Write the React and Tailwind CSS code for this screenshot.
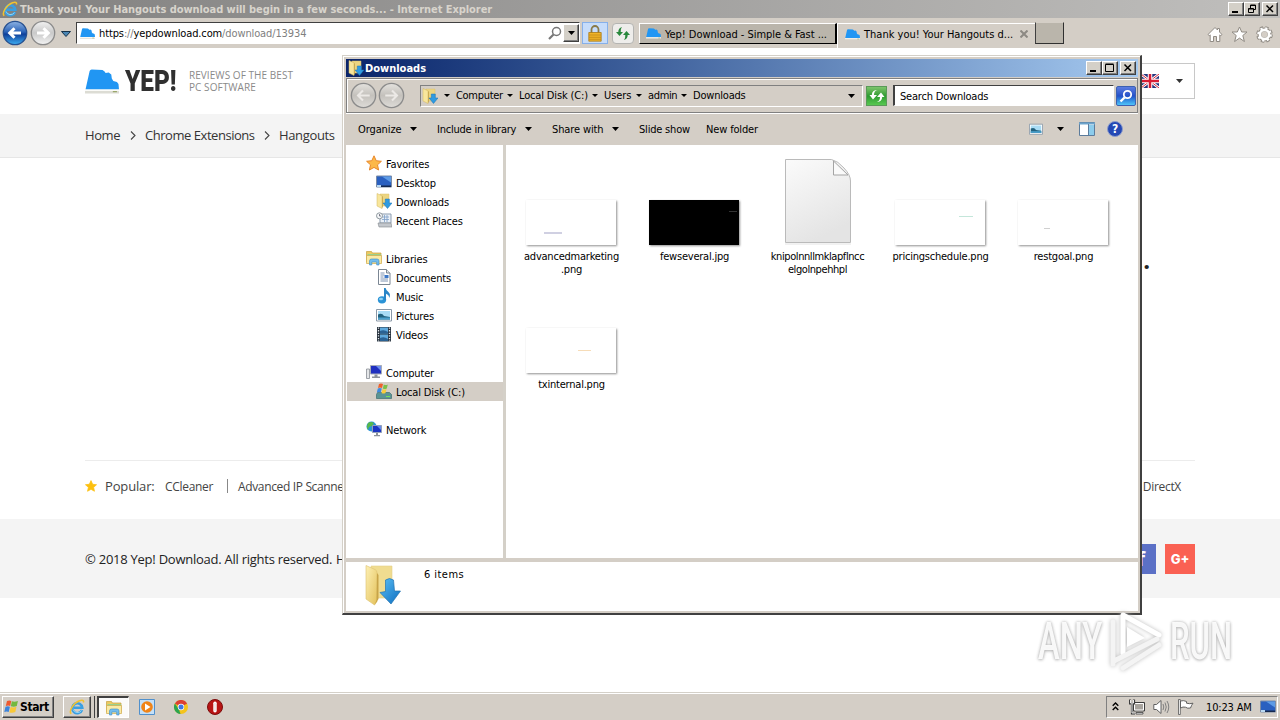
import React from 'react';
import clsx from 'clsx';

// Classic Windows bevels
const raised = "border border-t-white border-l-white border-r-[#404040] border-b-[#404040] shadow-[inset_-1px_-1px_0_#808080]";
const sunken = "border border-t-[#808080] border-l-[#808080] border-r-white border-b-white";

const ui = "font-['DejaVu_Sans_Condensed','DejaVu_Sans',sans-serif] [font-stretch:condensed] text-[11px] leading-[13px] whitespace-pre";

/* ---------- Icons ---------- */

const Caret = ({ className = "" }) => (
  <svg width="7" height="4" viewBox="0 0 7 4" className={clsx("shrink-0", className)}>
    <path d="M0 0h7L3.5 4z" fill="currentColor" />
  </svg>
);

const IeIcon = ({ size = 16 }) => (
  <svg width={size} height={size} viewBox="0 0 16 16" className="shrink-0">
    <path d="M13 11A5 5 0 1 1 13.300 8.800H4.800" fill="none" stroke="#3a9fe2" strokeWidth="2.600" />
    <path d="M12.500 11.500A4.800 4.800 0 0 1 4 10.500" fill="none" stroke="#9adaf8" strokeWidth="0.9" />
    <path d="M2.200 14.800C-.6 12 4.500 4 10.500 1.800c3-1.100 4.600-.4 3.900 1.800" fill="none" stroke="#f2c230" strokeWidth="1.500" />
  </svg>
);

const Hill = ({ className }) => (
  <svg viewBox="0 0 33 25" className={clsx("shrink-0", className)} preserveAspectRatio="none">
    <path d="M.5 20.500 4.500 2Q5 .5 6.500.5L17 1l2 1.500 1 1.500 3-.5 2.500 2 .5 4 1.500 2.500 3.500 1 1.500 2 .5 5.500z" fill="#2196f3" />
    <path d="M0 22h33v2.500H0z" fill="#dcdcd4" />
    <path d="M0 20.500h33v1.500H0z" fill="#fbfbf8" />
    <path d="M27 22.700h4" stroke="#8a9a50" />
  </svg>
);

const NavArrow = ({ kind, flip, size = 26 }) => (
  <svg width={size} height={size} viewBox="0 0 26 26" className="shrink-0">
    <defs>
      <linearGradient id="navblue" x1="0" y1="0" x2="0" y2="1">
        <stop offset="0" stopColor="#8fb4e4" />
        <stop offset="0.45" stopColor="#2c64b8" />
        <stop offset="0.55" stopColor="#0e3f9a" />
        <stop offset="1" stopColor="#3fb0f4" />
      </linearGradient>
      <linearGradient id="navgrey" x1="0" y1="0" x2="0" y2="1">
        <stop offset="0" stopColor="#f2f2f2" />
        <stop offset="0.5" stopColor="#c9c9c9" />
        <stop offset="1" stopColor="#f4f4f4" />
      </linearGradient>
      <linearGradient id="navdim" x1="0" y1="0" x2="0" y2="1">
        <stop offset="0" stopColor="#e4e2de" />
        <stop offset="0.5" stopColor="#c4c1bc" />
        <stop offset="1" stopColor="#dedcd8" />
      </linearGradient>
    </defs>
    <circle cx="13" cy="13" r="11.7" fill={`url(#nav${kind})`} stroke={kind === "blue" ? "#27508f" : "#8b8b8b"} strokeWidth="1.3" />
    <path
      d="M19 13H8.500M12.500 8.200 7.700 13l4.800 4.800"
      fill="none"
      stroke={kind === "dim" ? "#ece9e6" : "#fff"}
      strokeWidth={kind === "dim" ? 2 : 3}
      transform={flip ? "translate(26 0) scale(-1 1)" : undefined}
    />
  </svg>
);

const FolderDown = ({ size = 16 }) => (
  <svg width={size} height={size} viewBox="0 0 16 16" className="shrink-0">
    <path d="M4 1h9v12H5z" fill="#ecd582" stroke="#dcc06a" strokeWidth="0.5" />
    <path d="M1 .5 6 2.800V15.500L1 13z" fill="#f8e69c" stroke="#d2b55c" strokeWidth="0.5" />
    <path d="M6 2.800 6.800 4v9.500L6 15.500z" fill="#c2a148" />
    <path d="M9.300 6h4v4H16L11.500 15.500 7 10h2.300z" fill="#2f9be2" stroke="#1873b4" strokeWidth="0.5" />
  </svg>
);

const Star = ({ size = 16, fill = "#fcb848", stroke = "#e8872a" }) => (
  <svg width={size} height={size} viewBox="0 0 16 16" className="shrink-0">
    <path d="M8 .8l2.200 4.900 5.200.6-3.900 3.500 1.100 5.200L8 12.400 3.400 15l1.100-5.200L.6 6.300l5.200-.6z" fill={fill} stroke={stroke} strokeWidth="1" />
  </svg>
);

const Monitor = () => (
  <svg width="16" height="16" viewBox="0 0 16 16" className="shrink-0">
    <path d="M.5 2h15v11H.5z" fill="#2a60c0" stroke="#7a8ba6" />
    <path d="M6 2.500h9v6z" fill="#5d9be6" />
    <path d="M1 11h4v2H1z" fill="#b9d8f2" />
    <path d="M5 11.500h10v1.500H5z" fill="#16294e" />
  </svg>
);

const Recent = () => (
  <svg width="16" height="16" viewBox="0 0 16 16" className="shrink-0">
    <path d="M4 2h11v9H4z" fill="#eaf0f7" stroke="#8d9db0" />
    <path d="M6 5h7M6 7.500h7M8.500 3v7M11 3v7" stroke="#7da0c8" strokeWidth="0.8" />
    <path d="M2 11h13l1 4H3z" fill="#c3c7cc" stroke="#82878c" strokeWidth="0.6" />
    <circle cx="3.500" cy="3.800" r="3" fill="#f5f7f9" stroke="#8f999f" />
    <path d="M3.500 2v2H5" stroke="#556" strokeWidth="0.7" fill="none" />
  </svg>
);

const Libraries = ({ size = 16 }) => (
  <svg width={size} height={size} viewBox="0 0 16 16" className="shrink-0">
    <path d="M.5 1.500h5l1 1.500h8.500v9H.5z" fill="#eccb62" stroke="#c79f3c" strokeWidth="0.7" />
    <path d="M1.500 4h13.500v4H1.500z" fill="#9ad08c" />
    <path d="M.5 5.500h15v8H.5z" fill="#fbeaa4" stroke="#d0aa4c" strokeWidth="0.7" />
    <path d="M3.500 15V11q0-2 2-2h5.500q2 0 2 2v4h-2.300v-3H5.800v3z" fill="#74bdec" stroke="#3b8bc6" strokeWidth="0.6" />
  </svg>
);

const Documents = () => (
  <svg width="16" height="16" viewBox="0 0 16 16" className="shrink-0">
    <path d="M2.500.5h8l3.500 3.500v11.500h-11.500z" fill="#fff" stroke="#7b8693" />
    <path d="M10.500.5v3.500H14" fill="#dfe5eb" stroke="#7b8693" />
    <path d="M4.500 4h4M4.500 6h4M4.500 10h7.500M4.500 12h7.500M4.500 8h3" stroke="#7088aa" strokeWidth="0.9" />
    <path d="M8.500 6h4v3h-4z" fill="#3c78c8" />
  </svg>
);

const Music = () => (
  <svg width="16" height="16" viewBox="0 0 16 16" className="shrink-0">
    <ellipse cx="6" cy="11.800" rx="4.200" ry="3.600" fill="#2a93d6" />
    <ellipse cx="5" cy="11" rx="2" ry="1.300" fill="#8fd2f5" />
    <path d="M8 12V0h1.600q.5 2.500 2.800 4 2.600 2 .8 6-.2-3.200-3.200-4.200V12z" fill="#2a86c8" />
  </svg>
);

const Picture = ({ size = 16 }) => (
  <svg width={size} height={size} viewBox="0 0 16 16" className="shrink-0">
    <path d="M.5 2.500h15v11.500H.5z" fill="#fff" stroke="#8a99a8" />
    <path d="M2 4h12v8.500H2z" fill="#a9dcf5" />
    <path d="M2 7.500q4-2 6 1.500l6 1v2.500H2z" fill="#22627f" />
    <path d="M2 10.500h12v2H2z" fill="#4ba0cc" />
  </svg>
);

const Videos = () => (
  <svg width="16" height="16" viewBox="0 0 16 16" className="shrink-0">
    <path d="M1 1h14v14.500H1z" fill="#27323e" />
    <path d="M4 1.500h8v6H4zM4 8.500h8v6.500H4z" fill="#5fa9dc" />
    <path d="M4 5q4-2 8 1v1.500H4zM4 12q4-2 8 1v2H4z" fill="#2a6293" />
    <path d="M2.500 1.500v14M13.500 1.500v14" stroke="#e6eaee" strokeWidth="1.300" strokeDasharray="1.300 1.300" />
  </svg>
);

const Computer = () => (
  <svg width="16" height="16" viewBox="0 0 16 16" className="shrink-0">
    <path d="M.5 5h3v9.500h-3z" fill="#e4e6e8" stroke="#888d94" strokeWidth="0.8" />
    <path d="M4.500 1.500h11v8.500h-11z" fill="#2030c0" stroke="#a7adb8" />
    <path d="M10 2h5v5z" fill="#6f92f0" />
    <path d="M8.500 10.500h3v2h2.500v1.500H6v-1.500h2.500z" fill="#8d939b" />
  </svg>
);

const Disk = () => (
  <svg width="16" height="16" viewBox="0 0 16 16" className="shrink-0">
    <path d="M1.500 9.500h12l2 2v4H.5v-4z" fill="#5a9494" stroke="#3e6f70" strokeWidth="0.7" />
    <path d="M10 13.500h4" stroke="#74e05a" />
    <path d="M3 1q2-1 4 0L6 5Q4 4 2 5z" fill="#f0602c" />
    <path d="M7.800 1.500q2 1 4 0l-1 4q-2 1-4 0z" fill="#7cc04a" />
    <path d="M1.800 5.600q2-1 4 0l-1 4q-2-1-4 0z" fill="#3f8be0" />
    <path d="M6.500 6q2 1 4 0l-1 4q-2 1-4 0z" fill="#f8cc3c" />
  </svg>
);

const Network = () => (
  <svg width="16" height="16" viewBox="0 0 16 16" className="shrink-0">
    <circle cx="5.500" cy="5.500" r="5" fill="#2b93d8" />
    <path d="M2 2q3-2 6 0L6 5 3 6 2 9Q0 6 2 2z" fill="#57b84a" />
    <path d="M6.500 4.500h9v7h-9z" fill="#1c34c4" stroke="#93a0b8" />
    <path d="M11 5h4v4z" fill="#6488ee" />
    <path d="M10 12h2v2h2v1.300H8V14h2z" fill="#8d939b" />
  </svg>
);

const RefreshArrows = ({ color }) => (
  <svg width="16" height="16" viewBox="0 0 16 16">
    <path d="M8.500 2Q5 2.500 5 7H8L4 11.500.5 7H2.800Q3 2 8.500 2z" fill={color} />
    <path d="M7.500 14Q11 13.500 11 9H8l4-4.500L15.500 9h-2.300Q13 14 7.500 14z" fill={color} />
  </svg>
);

const WinFlag = () => (
  <svg width="15" height="14" viewBox="0 0 15 14" className="shrink-0">
    <path d="M3 1q2.500-1.200 4.300 0L6.200 6Q4.200 5 1.800 6z" fill="#ee5a30" />
    <path d="M7.900 1.300q2.500 1 6-.3L12.800 6q-2.700 1.200-6 .3z" fill="#74b83e" />
    <path d="M1.500 6.700q2.500-1 4.400 0l-1.200 5.300q-2-1-4.400 0z" fill="#3c84dc" />
    <path d="M6.600 7q2.500 1 5.900-.2l-1.200 5.300q-2.700 1.200-5.900.3z" fill="#f8c838" />
  </svg>
);

/* ---------- Shared parts ---------- */

const WinButton = ({ kind, className = "" }) => (
  <span className={clsx(raised, "flex h-[14px] w-4 shrink-0 items-center justify-center bg-[#d4d0c8]", className)}>
    <svg width="10" height="10" viewBox="0 0 10 10" stroke="#000" fill="none">
      {kind === "min" && <path d="M1 8h6" strokeWidth="2" />}
      {kind === "max" && <path d="M.5 1.500h8v7h-8zM.5 1h8" strokeWidth="1" />}
      {kind === "restore" && <path d="M3.500 4V1h5v4.500H7M3.500 1.500h5M1.500 4.500h5v4h-5zM1.500 5h5" />}
      {kind === "close" && <path d="M1.500 1.500l6.500 6.500M8 1.500 1.500 8" strokeWidth="1.500" />}
    </svg>
  </span>
);

/* ---------- Browser ---------- */

const BrowserBar = () => (
  <>
    <div className="flex h-[18px] items-center bg-linear-to-r from-[#828180] to-[#c0bfbd] pl-[2px] pr-[2px]">
      <IeIcon />
      <span className={clsx(ui, "ml-[2px] flex-1 font-bold text-[#d8d4cc] tracking-[-0.06px]")}>
        Thank you! Your Hangouts download will begin in a few seconds... - Internet Explorer
      </span>
      <WinButton kind="min" />
      <WinButton kind="restore" />
      <WinButton kind="close" className="ml-[2px]" />
    </div>

    <div className="flex h-[30px] items-start bg-[#d4cec6] pl-[2px] pt-[2px]">
      <NavArrow kind="blue" />
      <span className="ml-[2px] flex"><NavArrow kind="grey" flip /></span>
      <svg width="10" height="6" viewBox="0 0 10 6" className="ml-[5px] mt-[11px] shrink-0">
        <path d="M.5.500h9L5 5.500z" fill="#4a86b4" stroke="#16324a" />
      </svg>

      <div className="ml-[5px] mt-[2px] flex h-[22px] w-[504px] shrink-0 items-center border border-b-white border-l-[#404040] border-r-white border-t-[#404040] bg-white pl-[3px]">
        <Hill className="h-[11px] w-[15px]" />
        <span className={clsx(ui, "ml-[4px] mt-px flex-1 text-[#808080] tracking-[-0.12px]")}>
          <span className="text-black">https</span>://<span className="text-black">yepdownload.com</span>/download/13934
        </span>
        <svg width="14" height="14" viewBox="0 0 14 14" fill="none" stroke="#777">
          <circle cx="8.500" cy="5.500" r="4" strokeWidth="1.500" />
          <path d="M5.500 8.500 1 13" strokeWidth="2.200" />
        </svg>
        <span className={clsx(raised, "ml-px flex h-[18px] w-4 items-center justify-center bg-[#d4d0c8]")}>
          <Caret />
        </span>
      </div>

      <div className="ml-[2px] mt-[2px] flex h-[22px] w-[26px] shrink-0 items-center justify-center border border-[#86b0ea] bg-[#c6dcfa]">
        <svg width="14" height="17" viewBox="0 0 14 17">
          <path d="M3.500 8V4.500a3.500 3.500 0 0 1 7 0V8" fill="none" stroke="#8a7a48" strokeWidth="1.800" />
          <path d="M.8 7.500h12.400v8.700H.8z" fill="#f0b428" stroke="#a87818" strokeWidth="0.8" />
          <path d="M1 10h12M1 12.300h12M1 14.300h12" stroke="#c08818" strokeWidth="0.8" />
        </svg>
      </div>
      <div className="ml-1 mt-[3px] flex h-[21px] w-[22px] shrink-0 items-center justify-center rounded-sm border border-[#b4b4b2] bg-[#eeedeb]">
        <svg width="14" height="13" viewBox="0 0 14 13" fill="#28883c">
          <path d="M6 0Q4.500 1.500 4.700 5H7L3.500 9 0 5h2.300Q2.300 1 6 0z" />
          <path d="M8 13q1.500-1.500 1.300-5H7l3.500-4L14 8h-2.300Q11.700 12 8 13z" />
        </svg>
      </div>

      <div className="ml-[5px] mt-[3px] flex h-[21px] w-[198px] shrink-0 items-center border border-r-2 border-b-black border-l-white border-r-black border-t-white bg-[#bab5ab] pl-[6px]">
        <Hill className="h-[11px] w-[15px]" />
        <span className={clsx(ui, "ml-[4px] mt-px tracking-[-0.04px]")}>Yep! Download - Simple &amp; Fast ...</span>
      </div>
      <div className="mt-[3px] flex h-[25px] w-[198px] shrink-0 items-center border-l border-t border-white pb-[4px] pl-[7px]">
        <Hill className="h-[11px] w-[15px]" />
        <span className={clsx(ui, "ml-[4px] flex-1 tracking-[0px]")}>Thank you! Your Hangouts d...</span>
        <svg width="8" height="8" viewBox="0 0 8 8" className="mr-[7px]" stroke="#8d8983" strokeWidth="2">
          <path d="M.5.500l7 7M7.500.500l-7 7" />
        </svg>
      </div>
      <div className="mt-[2px] h-[22px] w-[29px] shrink-0 border border-b-[#303030] border-l-[#404040] border-r-[#303030] border-t-[#d4cec6] bg-[#bab5ab]" />

      <div className="ml-auto mr-[7px] mt-[6px] flex items-center gap-[8px]">
        <svg width="16" height="17" viewBox="0 0 16 17">
          <path d="M8 1.500 1 8.500l1.300 1.200.9-.8V15.500H6.500v-5h3v5h3.300V8.900l.9.800L15 8.500l-2.500-2.500V2.500h-2v1.500z" fill="#fff" stroke="#908b84" />
        </svg>
        <svg width="17" height="17" viewBox="0 0 17 17">
          <path d="M8.500 1l2.200 5h5.300l-4.200 3.500 1.600 6-4.900-3.400-4.900 3.400 1.600-6L1 6h5.300z" fill="#fff" stroke="#908b84" />
        </svg>
        <svg width="17" height="17" viewBox="0 0 17 17" fill="none">
          <circle cx="8.500" cy="8.500" r="6.500" stroke="#908b84" strokeWidth="3.600" strokeDasharray="3 2.100" />
          <circle cx="8.500" cy="8.500" r="5" stroke="#908b84" strokeWidth="4" />
          <circle cx="8.500" cy="8.500" r="6.300" stroke="#fff" strokeWidth="2" strokeDasharray="2.200 2.750" />
          <circle cx="8.500" cy="8.500" r="4.600" stroke="#fff" strokeWidth="2.600" />
          <circle cx="8.500" cy="8.500" r="2.300" fill="#d4cec6" />
        </svg>
      </div>
    </div>
  </>
);

const Chevron = () => (
  <svg width="6" height="9" viewBox="0 0 6 9" fill="none" stroke="#444" strokeWidth="1.100" className="shrink-0">
    <path d="M1 .5l4 4-4 4" />
  </svg>
);

const Page = () => (
  <div className="flex h-[644px] flex-col bg-white font-['Open_Sans',sans-serif] text-[13px] leading-[18px] text-[#333]">
    <header className="flex h-[66px] items-center pl-[85px] pr-[85px]">
      <Hill className="h-[25px] w-[34px]" />
      <span className="ml-[6px] w-[64px] origin-left scale-x-[0.84] font-['Roboto',sans-serif] text-[29px] font-black leading-[30px] text-[#303030]">YEP!</span>
      <p className="mb-px whitespace-nowrap text-[10px] leading-[12px] tracking-[0.06px] text-[#8a8a8a]">
        REVIEWS OF THE BEST
        <br />
        PC SOFTWARE
      </p>
      <div className="ml-auto flex h-9 w-[71px] items-center border border-[#c8c8c8] pl-[16px]">
        <svg width="18" height="14" viewBox="0 0 18 14">
          <path d="M0 0h18v14H0z" fill="#26347c" />
          <path d="M0 0l18 14M18 0L0 14" stroke="#fff" strokeWidth="2.600" />
          <path d="M0 0l18 14M18 0L0 14" stroke="#d8283c" strokeWidth="1" />
          <path d="M9 0v14M0 7h18" stroke="#fff" strokeWidth="4.500" />
          <path d="M9 0v14M0 7h18" stroke="#d81c34" strokeWidth="2.500" />
        </svg>
        <Caret className="ml-[17px]" />
      </div>
    </header>

    <nav className="flex h-11 items-center gap-[10px] whitespace-nowrap border-b border-[#e6e6e6] bg-[#f4f4f4] pl-[85px] pb-px font-medium">
      <span className="w-[35px] tracking-[-0.4px]">Home</span>
      <Chevron />
      <span className="-ml-px w-[109px] tracking-[-0.46px]">Chrome Extensions</span>
      <Chevron />
      <span className="-ml-px tracking-[-0.35px]">Hangouts</span>
    </nav>

    <main className="flex h-[302px] items-start justify-end pr-[130px] pt-[88px]">
      <span className="text-[24px] font-bold leading-[28px] text-[#222]">...</span>
    </main>

    <section className="mx-[85px] flex h-[59px] items-center whitespace-nowrap border-t border-[#ececec] pb-[7px] text-[12px] text-[#444]">
      <span className="mb-[2px]"><Star size={12} fill="#fcc010" stroke="#fcc010" /></span>
      <span className="mb-px ml-2 w-[60px] text-[13px] tracking-[-0.15px]">Popular:</span>
      <span className="w-[62px] tracking-[-0.3px]">CCleaner</span>
      <span className="mb-[2px] h-[14px] w-px bg-[#888]" />
      <span className="ml-[10px] tracking-[-0.35px]">Advanced IP Scanner</span>
      <span className="ml-auto mr-[14px] tracking-[-0.3px]">DirectX</span>
    </section>

    <footer className="flex h-[79px] items-center whitespace-pre bg-[#f4f4f4] px-[85px] font-medium text-[#222]">
      <span className="w-[251px] tracking-[-0.25px]">© 2018 Yep! Download. All rights reserved.</span>
      <span>H</span>
      <span className="ml-auto flex h-[30px] w-[30px] items-center justify-center bg-[#5b70c6] text-[20px] font-bold text-white">f</span>
      <span className="ml-[9px] flex h-[30px] w-[30px] items-center justify-center bg-[#fa6153] font-['Inter',sans-serif] text-[13px] font-extrabold text-white">G+</span>
    </footer>
  </div>
);

/* ---------- Explorer window ---------- */

const places = [
  { label: "Favorites", icon: <Star /> },
  { label: "Desktop", icon: <Monitor />, child: true },
  { label: "Downloads", icon: <FolderDown />, child: true },
  { label: "Recent Places", icon: <Recent />, child: true },
  null,
  { label: "Libraries", icon: <Libraries /> },
  { label: "Documents", icon: <Documents />, child: true },
  { label: "Music", icon: <Music />, child: true },
  { label: "Pictures", icon: <Picture />, child: true },
  { label: "Videos", icon: <Videos />, child: true },
  null,
  { label: "Computer", icon: <Computer /> },
  { label: "Local Disk (C:)", icon: <Disk />, child: true, active: true },
  null,
  { label: "Network", icon: <Network /> },
];

// mark: the small strip visible inside each thumbnail
const files = [
  { name: "advancedmarketing\n.png", mark: "ml-[18px] mt-[32px] w-[18px] h-[2px] bg-[#d0d0e2]" },
  { name: "fewseveral.jpg", dark: true, mark: "ml-[80px] mt-[11px] w-[8px] h-px bg-[#333]" },
  { name: "knipolnnllmklapflncc\nelgolnpehhpl", blank: true, tight: true },
  { name: "pricingschedule.png", mark: "ml-[64px] mt-[16px] w-[14px] h-px bg-[#c4e6da]" },
  { name: "restgoal.png", mark: "ml-[26px] mt-[28px] w-[6px] h-px bg-[#d0d0d0]" },
  { name: "txinternal.png", mark: "ml-[52px] mt-[22px] w-[13px] h-px bg-[#f6dcb8]" },
];

const BlankFile = () => (
  <svg width="68" height="88" viewBox="0 0 68 88" className="relative top-px">
    <defs>
      <linearGradient id="sheet" x1="0" y1="0" x2="0.4" y2="1">
        <stop offset="0" stopColor="#fbfbfb" />
        <stop offset="1" stopColor="#e4e4e4" />
      </linearGradient>
    </defs>
    <path d="M1.500 1.500h46Q54 3 60 10q6.500 7 6.500 13v61.500h-65z" fill="url(#sheet)" stroke="#bababa" />
    <path d="M1 86h66" stroke="#e4e4e4" />
    <path d="M49.500 3v14h14.500z" fill="#fafafa" stroke="#a4a4a4" />
  </svg>
);

const FileCell = ({ file }) => (
  <div className="flex h-32 w-[123px] flex-col items-center">
    <div className="flex h-[90px] items-end">
      {file.blank ? (
        <BlankFile />
      ) : (
        <div className={clsx("mr-px h-[45px] w-[90px] shadow-[1px_1px_2px_#909090]", file.dark ? "bg-black" : "bg-white")}>
          <div className="flex">
            <div className={file.mark} />
          </div>
        </div>
      )}
    </div>
    <span className={clsx(ui, "mt-[5px] text-center", file.tight ? "tracking-[-0.42px]" : "tracking-[-0.22px]")}>{file.name}</span>
  </div>
);

const Crumb = ({ children, className }) => (
  <>
    <svg width="6" height="3" viewBox="0 0 6 3" className="shrink-0"><path d="M0 0h6L3 3z" /></svg>
    <span className={clsx("ml-[6px] shrink-0", className)}>{children}</span>
  </>
);

const Explorer = () => (
  <div className={clsx(ui, "absolute left-[342px] top-[55px] flex h-[560px] w-[800px] flex-col border border-b-2 border-r-2 border-b-[#404040] border-l-[#d4d0c8] border-r-[#404040] border-t-[#d4d0c8] bg-[#d4cec6] pb-[2px] pl-[3px] pr-[2px] pt-[3px] tracking-[-0.2px] text-black shadow-[inset_1px_1px_0_#fff]")}>
    <div className="flex h-[18px] shrink-0 items-center bg-linear-to-r from-[#0a246a] to-[#a6caf0] pl-[2px] pr-[2px]">
      <FolderDown />
      <span className="ml-px flex-1 font-bold tracking-[0px] text-white">Downloads</span>
      <WinButton kind="min" />
      <WinButton kind="max" />
      <WinButton kind="close" className="ml-[2px]" />
    </div>

    {/* Address row */}
    <div className="mt-[1px] flex h-[35px] shrink-0 items-center border border-b-[#808080] border-l-[#808080] border-r-[#808080] border-t-[#808080] pl-[3px] pr-px shadow-[inset_1px_1px_0_#fff,0_1px_0_#fff]">
      <NavArrow kind="dim" size={27} />
      <span className="ml-px flex"><NavArrow kind="dim" flip size={27} /></span>
      <div className={clsx(sunken, "ml-[15px] flex h-[22px] w-[443px] shrink-0 items-center pl-[1px]")}>
        <FolderDown />
        <span className="w-[6px] shrink-0" />
        <Crumb className="w-[51px] tracking-[-0.3px]">Computer</Crumb>
        <Crumb className="w-[73px] tracking-[-0.15px]">Local Disk (C:)</Crumb>
        <Crumb className="w-[32px] tracking-[-0.1px]">Users</Crumb>
        <Crumb className="w-[33px] tracking-[-0.35px]">admin</Crumb>
        <Crumb>Downloads</Crumb>
        <Caret className="ml-auto mr-[7px]" />
      </div>
      <span className="ml-[3px] flex h-5 w-[21px] items-center justify-center border border-[#5a9a58] bg-linear-to-b from-[#7cc46c] via-[#2c9c30] to-[#58c850]">
        <RefreshArrows color="#fff" />
      </span>
      <div className="ml-[6px] flex h-[21px] flex-1 items-center border border-l-2 border-b-white border-l-[#404040] border-r-white border-t-[#404040] bg-white pl-[5px] pt-px tracking-[-0.2px]">
        Search Downloads
      </div>
      <span className="ml-[2px] flex h-5 w-5 items-center justify-center rounded-[2px] border border-[#3c60b0] bg-linear-to-b from-[#5c7ce0] via-[#2450c8] to-[#50c4f8]">
        <svg width="14" height="14" viewBox="0 0 14 14" fill="none" stroke="#fff">
          <circle cx="8.500" cy="5.500" r="3.700" strokeWidth="1.800" />
          <path d="M5.500 8.500 1.500 12.500" strokeWidth="2.400" />
        </svg>
      </span>
    </div>

    {/* Command bar */}
    <div className="flex h-[32px] shrink-0 items-center pl-[12px] pr-[15px]">
      <span className="w-[52px] tracking-[-0.1px]">Organize</span>
      <Caret />
      <span className="ml-[20px] w-[88px] tracking-[-0.22px]">Include in library</span>
      <Caret />
      <span className="ml-[20px] w-[60px] tracking-[-0.12px]">Share with</span>
      <Caret />
      <span className="ml-[20px] w-[67px]">Slide show</span>
      <span className="flex-1 tracking-[-0.15px]">New folder</span>
      <Picture size={14} />
      <Caret className="ml-[14px]" />
      <svg width="16" height="14" viewBox="0 0 16 14" className="ml-[15px]">
        <path d="M.5.500h15v13H.5z" fill="#fff" stroke="#5c7c9c" />
        <path d="M0 1.500h16" stroke="#6ca4cc" strokeWidth="2" />
        <path d="M10 3h5v10h-5z" fill="#8cccec" />
        <path d="M9.500 2v12" stroke="#5c7c9c" />
      </svg>
      <span className="ml-[12px] flex h-4 w-4 items-center justify-center rounded-full border border-[#8c9ccc] bg-[#2448b4] text-[12px] font-bold text-white">?</span>
    </div>

    <div className="flex h-[413px] shrink-0 bg-white">
      <div className="w-[160px] shrink-0 border-l border-r-3 border-l-white border-r-[#d4d0c8] pt-[9px]">
        {places.map((p, i) =>
          p ? (
            <div key={i} className={clsx("flex h-[19px] items-center", p.child ? "pl-[29px]" : "pl-[19px]", p.active && "bg-[#d4cec6]")}>
              <span className="mb-px">{p.icon}</span>
              <span className="ml-[4px] mt-[2px] tracking-[-0.15px]">{p.label}</span>
            </div>
          ) : (
            <div key={i} className="h-[19px]" />
          )
        )}
      </div>
      <div className="flex flex-1 flex-wrap content-start pl-1 pt-[10px]">
        {files.map(f => <FileCell key={f.name} file={f} />)}
      </div>
    </div>

    {/* Details pane */}
    <div className="mt-1 flex h-[50px] items-start bg-white pl-[17px] pt-[2px]">
      <svg width="40" height="42" viewBox="0 0 40 42">
        <defs>
          <linearGradient id="fold" x1="0" y1="0" x2="1" y2="1">
            <stop offset="0" stopColor="#fdf0b4" />
            <stop offset="1" stopColor="#e4c25c" />
          </linearGradient>
          <linearGradient id="down" x1="0" y1="0" x2="1" y2="1">
            <stop offset="0" stopColor="#5cc0f4" />
            <stop offset="1" stopColor="#0c6cc0" />
          </linearGradient>
        </defs>
        <path d="M8 2h21v32H10z" fill="#f0dc90" stroke="#e4d08c" strokeWidth="0.6" />
        <path d="M3 1.500l9 4q2 1 2 3v29L11.500 41 3 35z" fill="url(#fold)" stroke="#dcc070" strokeWidth="0.6" />
        <path d="M14 9l1.500 2v24l-4 6 2-5z" fill="#c8a448" />
        <path d="M22.500 16q4-3 8 0l1 11h6L28 40 17 28.500l5.500-1z" fill="url(#down)" stroke="#2474b0" strokeWidth="0.7" />
      </svg>
      <span className="ml-[21px] mt-[4px] tracking-[0.45px]">6 items</span>
    </div>
  </div>
);

/* ---------- Taskbar and watermark ---------- */

const Taskbar = () => (
  <div className={clsx(ui, "flex h-[28px] items-center border-t border-[#d4d0c8] bg-[#d4cec6] pl-[2px] pr-[2px] shadow-[inset_0_1px_0_#fff]")}>
    <div className={clsx(raised, "mt-[1px] flex h-[22px] w-[52px] shrink-0 items-center pl-px")}>
      <WinFlag />
      <span className="ml-px text-[12px] font-bold tracking-[-0.4px]">Start</span>
    </div>
    <div className={clsx(raised, "ml-[9px] mt-[1px] flex h-[22px] w-7 items-center justify-center")}>
      <IeIcon />
    </div>
    <div className="mt-[1px] h-[22px] w-[4px] border-r border-[#404040]" />
    <div className="ml-[2px] mt-[1px] flex h-[22px] w-[32px] items-center justify-center border-b border-l-2 border-r border-t-2 border-b-white border-l-[#404040] border-r-white border-t-[#404040] bg-[#fbfaf9]">
      <Libraries />
    </div>
    <svg width="16" height="16" viewBox="0 0 16 16" className="ml-[10px] mt-[1px]">
      <path d="M.5.500h15v15H.5z" fill="#c4e0f8" stroke="#5090cc" />
      <circle cx="8" cy="8" r="5.800" fill="#f08418" />
      <path d="M6 4.500 11.500 8 6 11.500z" fill="#fff" />
    </svg>
    <svg width="14" height="14" viewBox="0 0 14 14" className="ml-[19px] mt-[1px]">
      <circle cx="7" cy="7" r="7" fill="#f4c41c" />
      <path d="M7 7 .9 3.500A7 7 0 0 1 13.100 3.500z" fill="#dc4034" />
      <path d="M.9 3.500 5 9.500 6.500 14A7 7 0 0 1 .9 3.500z" fill="#2ca450" />
      <circle cx="7" cy="7" r="3.200" fill="#fff" />
      <circle cx="7" cy="7" r="2.500" fill="#4078e4" />
    </svg>
    <svg width="16" height="16" viewBox="0 0 16 16" className="ml-[19px] mt-[1px]">
      <circle cx="8" cy="8" r="7.500" fill="#b81414" stroke="#7c0c0c" />
      <rect x="6.300" y="2.500" width="3.400" height="11" rx="1.700" fill="#fff" />
      <path d="M8 4v8" stroke="#d8b8b8" strokeWidth="0.700" />
    </svg>

    <div className={clsx(sunken, "ml-auto mt-[1px] flex h-[22px] w-[172px] items-center pl-[5px] pr-[1px]")}>
      <svg width="7" height="9" viewBox="0 0 7 9" fill="none" stroke="#000" strokeWidth="1.400" className="mb-[2px]">
        <path d="M.7 3.700 3.500 1l2.800 2.700M.7 8 3.500 5.300 6.300 8" />
      </svg>
      <svg width="16" height="16" viewBox="0 0 16 16" className="ml-[10px]">
        <path d="M4.500 3.500h11v8.500h-11z" fill="#a8a49e" stroke="#3c3c3c" />
        <path d="M5.500 4.500h9v6.500h-9z" fill="none" stroke="#fff" />
        <path d="M7 13.500h7v1.500H7z" fill="#fff" stroke="#3c3c3c" strokeWidth="0.8" />
        <path d="M1 .5v4h4v-4M3 4.500v10h3" fill="none" stroke="#3c3c3c" strokeWidth="2.200" />
        <path d="M1.500 1v3h3V1M3 4.500v9.500h3" fill="none" stroke="#fff" strokeWidth="0.9" />
      </svg>
      <svg width="17" height="16" viewBox="0 0 17 16" className="ml-[8px]">
        <path d="M.8 5.500h2.700L8 1.500v13l-4.500-4H.8z" fill="#fff" stroke="#606060" />
        <path d="M10 5q1.500 3 0 6M12 3.500q2.500 4.500 0 9M14 2q3.500 6 0 12" fill="none" stroke="#808080" />
      </svg>
      <svg width="17" height="16" viewBox="0 0 17 16" className="ml-[7px]">
        <path d="M1.500.5v15h1.800V.5z" fill="#fff" stroke="#555" strokeWidth="0.800" />
        <path d="M3.500 2q3-1 6 .5v1.700q3 1 6.500 0Q14.500 6 13.500 9q-3 .8-5-.8-2.500-.7-5 .8z" fill="#fff" stroke="#555" strokeWidth="0.900" />
      </svg>
      <span className="ml-auto w-[46px] tracking-[-0.15px]">10:23 AM</span>
      <span className="ml-[8px]"><Monitor /></span>
    </div>
  </div>
);

const Watermark = () => (
  <div className="absolute left-[1038px] top-[611px] flex h-[62px] items-center font-['Roboto',sans-serif] text-[51px] font-medium leading-[50px] text-white/90 [text-shadow:0_0_4px_#b4b4b4,0_1px_4px_#c4c4c4]">
    <span className="w-[68px] origin-left scale-x-[0.64]">ANY</span>
    <svg width="60" height="62" viewBox="0 0 60 62" fill="none" strokeLinejoin="round" strokeLinecap="round" className="overflow-visible drop-shadow-[0_0_2px_#bcbcbc]">
      <path d="M17 42V4l36 20" stroke="#fff" strokeWidth="5" />
      <path d="M7 11v42M8 50l43-22M17 57l36-23" stroke="#f4f4f4" strokeWidth="5" />
      <path d="M21 16v20l18-9z" fill="#fff" />
    </svg>
    <span className="ml-[4px] w-[64px] origin-left scale-x-[0.61]">RUN</span>
  </div>
);

const App = () => (
  <div className="relative flex h-[720px] w-[1280px] flex-col overflow-hidden bg-white">
    <BrowserBar />
    <Page />
    <Taskbar />
    <Explorer />
    <Watermark />
  </div>
);

export default App;
